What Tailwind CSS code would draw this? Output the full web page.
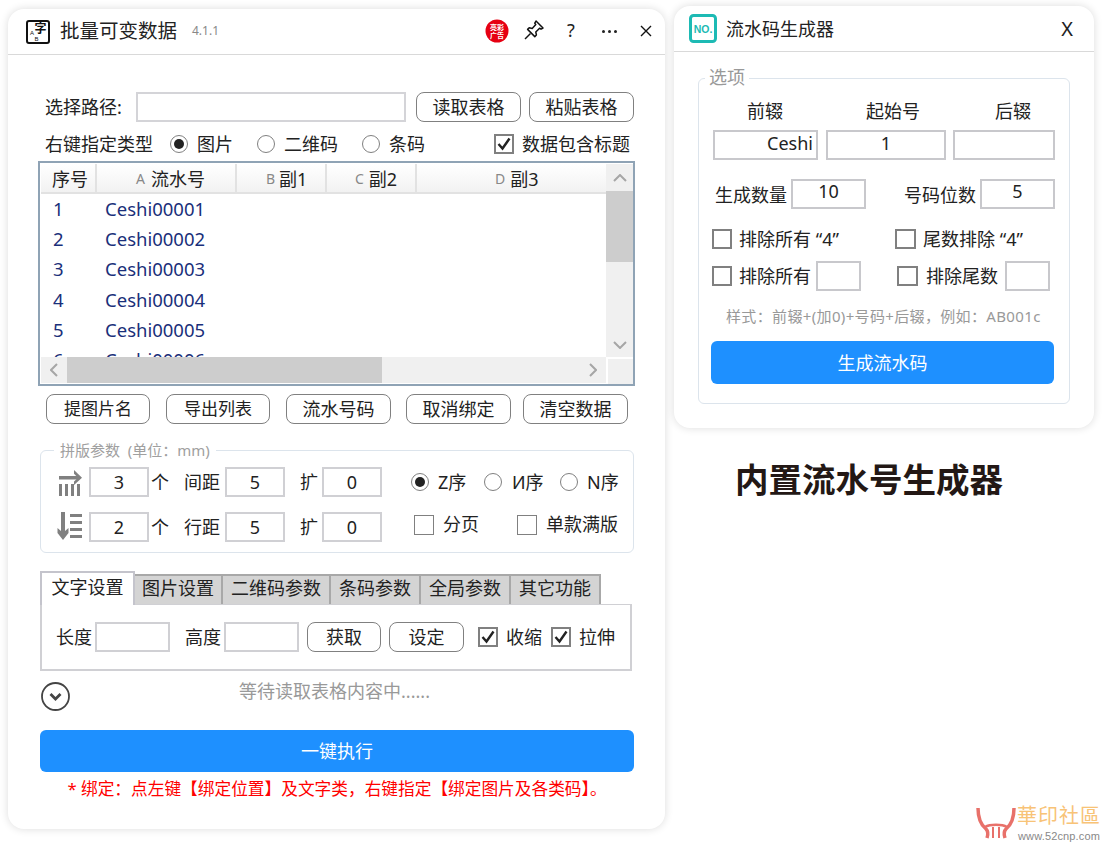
<!DOCTYPE html>
<html lang="zh-CN">
<head>
<meta charset="UTF-8">
<title>批量可变数据</title>
<script src="https://cdn.jsdelivr.net/npm/@tailwindcss/browser@4"></script>
</head>
<body class="bg-white">
<div class="relative w-[1104px] h-[843px] overflow-hidden bg-white text-[18px] leading-[30px] text-[#222] font-['Noto_Sans','Noto_Sans_CJK_SC',sans-serif]">

  <!-- main window -->
  <div class="absolute left-[8px] top-[9px] w-[657px] h-[820px] rounded-[16px] bg-white shadow-[0_0_8px_rgba(0,0,0,0.14)]">
    <!-- title bar -->
    <div class="relative h-[46px] border-b border-[#d9d9d9]">
      <svg class="absolute left-[18px] top-[11px]" width="24" height="24" viewBox="0 0 24 24">
        <rect x="1" y="1" width="22" height="22" rx="2" fill="#fff" stroke="#111" stroke-width="2"/>
        <text x="14.5" y="12.5" text-anchor="middle" font-size="12" font-weight="700" fill="#111" font-family="Noto Sans CJK SC">字</text>
        <text x="6" y="15" text-anchor="middle" font-size="6" fill="#111" font-family="Liberation Sans">A</text>
        <text x="10.5" y="21" text-anchor="middle" font-size="6" fill="#111" font-family="Liberation Sans">B</text>
      </svg>
      <div class="absolute left-[52px] top-[7px] text-[19.5px] leading-[30px] whitespace-nowrap">批量可变数据</div>
      <div class="absolute left-[184px] top-[7px] text-[12px] leading-[30px] text-[#888]">4.1.1</div>
      <svg class="absolute left-[477px] top-[10px]" width="24" height="24" viewBox="0 0 24 24">
        <circle cx="12" cy="12" r="11.5" fill="#e60012"/>
        <text x="12" y="11" text-anchor="middle" font-size="7" font-weight="700" fill="#fff" font-family="Noto Sans CJK SC">亮彩</text>
        <text x="12" y="19" text-anchor="middle" font-size="7" font-weight="700" fill="#fff" font-family="Noto Sans CJK SC">广告</text>
      </svg>
      <svg class="absolute left-[515px] top-[10px]" width="22" height="22" viewBox="0 0 22 22" fill="none" stroke="#111" stroke-width="1.5" stroke-linejoin="round">
        <path d="M13 2 L20 9 L18 10.2 L16.6 9.2 L12.8 13 L13.4 16 L11.8 17.6 L4.6 10.4 L6.2 8.8 L9.2 9.4 L12.8 5.6 L11.8 4.2 Z"/>
        <path d="M7.5 14.5 L2 20"/>
      </svg>
      <div class="absolute left-[556px] top-[6px] w-[14px] text-center text-[18px] leading-[30px]">?</div>
      <div class="absolute left-[594px] top-[21px] flex gap-[3px]">
        <span class="w-[3px] h-[3px] bg-[#222] rounded-full"></span>
        <span class="w-[3px] h-[3px] bg-[#222] rounded-full"></span>
        <span class="w-[3px] h-[3px] bg-[#222] rounded-full"></span>
      </div>
      <svg class="absolute left-[632px] top-[16px]" width="12" height="12" viewBox="0 0 12 12" stroke="#111" stroke-width="1.4">
        <path d="M1 1 L11 11 M11 1 L1 11"/>
      </svg>
    </div>

    <div class="pl-[32px] w-[657px]">
      <!-- path row -->
      <div class="flex items-center h-[30px] mt-[37px]">
        <span class="ml-[5px] w-[91px]">选择路径:</span>
        <div class="w-[270px] h-[30px] border-2 border-[#d4d4d8]"></div>
        <div class="ml-[10px] w-[105px] h-[30px] rounded-[8px] border-[1.5px] border-[#808080] flex items-center justify-center">读取表格</div>
        <div class="ml-[8px] w-[105px] h-[30px] rounded-[8px] border-[1.5px] border-[#808080] flex items-center justify-center">粘贴表格</div>
      </div>

      <!-- type row -->
      <div class="flex items-center h-[30px] mt-[7px]">
        <span class="ml-[5px] w-[125px]">右键指定类型</span>
        <span class="w-[18px] h-[18px] rounded-full border-[1.5px] border-[#808080] flex items-center justify-center"><span class="w-[10px] h-[10px] rounded-full bg-[#222]"></span></span>
        <span class="ml-[9px] w-[60px]">图片</span>
        <span class="w-[18px] h-[18px] rounded-full border-[1.5px] border-[#808080]"></span>
        <span class="ml-[9px] w-[78px]">二维码</span>
        <span class="w-[18px] h-[18px] rounded-full border-[1.5px] border-[#808080]"></span>
        <span class="ml-[9px] w-[105px]">条码</span>
        <span class="w-[20px] h-[20px] border-2 border-[#808080] flex items-center justify-center">
          <svg width="16" height="16" viewBox="0 0 16 16" fill="none" stroke="#222" stroke-width="2.4"><path d="M2.5 8 L6.5 12.5 L13.5 2.5"/></svg>
        </span>
        <span class="ml-[8px]">数据包含标题</span>
      </div>

      <!-- table -->
      <div class="relative -ml-[2px] mt-[2px] w-[597px] h-[225px] border-2 border-[#8fa3b5] overflow-hidden bg-white">
        <div class="flex h-[30px] mt-px ml-px w-[565px] text-[18px] bg-gradient-to-b from-white to-[#f2f2f2] border-b-2 border-[#e2e2e2]">
          <div class="w-[56px] border-r-2 border-[#e2e2e2] pl-[11px]">序号</div>
          <div class="w-[140px] border-r-2 border-[#e2e2e2] pl-[39px]"><span class="relative -top-[2px] text-[14px] text-[#888] mr-[6px]">A</span>流水号</div>
          <div class="w-[90px] border-r-2 border-[#e2e2e2] pl-[29px]"><span class="relative -top-[2px] text-[14px] text-[#888] mr-[4px]">B</span>副1</div>
          <div class="w-[90px] border-r-2 border-[#e2e2e2] pl-[28px]"><span class="relative -top-[2px] text-[14px] text-[#888] mr-[5px]">C</span>副2</div>
          <div class="w-[189px] pl-[78px]"><span class="relative -top-[2px] text-[14px] text-[#888] mr-[5px]">D</span>副3</div>
        </div>
        <div class="text-[#1a2f7a] text-[18.5px] leading-[30.2px]">
          <div class="flex"><span class="ml-[13px] w-[52px]">1</span><span>Ceshi00001</span></div>
          <div class="flex"><span class="ml-[13px] w-[52px]">2</span><span>Ceshi00002</span></div>
          <div class="flex"><span class="ml-[13px] w-[52px]">3</span><span>Ceshi00003</span></div>
          <div class="flex"><span class="ml-[13px] w-[52px]">4</span><span>Ceshi00004</span></div>
          <div class="flex"><span class="ml-[13px] w-[52px]">5</span><span>Ceshi00005</span></div>
          <div class="flex"><span class="ml-[13px] w-[52px]">6</span><span>Ceshi00006</span></div>
        </div>
        <!-- vertical scrollbar -->
        <div class="absolute left-[566px] top-px w-[27px] h-[193px] bg-[#f0f0f0] flex flex-col">
          <div class="h-[27px] flex items-center justify-center"><svg width="14" height="8" viewBox="0 0 14 8" fill="none" stroke="#a6a6a6" stroke-width="2"><path d="M1 7 L7 1 L13 7"/></svg></div>
          <div class="h-[71px] bg-[#cdcdcd]"></div>
          <div class="mt-auto h-[25px] flex items-center justify-center"><svg width="14" height="8" viewBox="0 0 14 8" fill="none" stroke="#a6a6a6" stroke-width="2"><path d="M1 1 L7 7 L13 1"/></svg></div>
        </div>
        <!-- horizontal scrollbar -->
        <div class="absolute left-px top-[194px] w-[565px] h-[26px] bg-[#f0f0f0] flex">
          <div class="w-[26px] flex items-center justify-center"><svg width="8" height="14" viewBox="0 0 8 14" fill="none" stroke="#a6a6a6" stroke-width="2"><path d="M7 1 L1 7 L7 13"/></svg></div>
          <div class="w-[315px] bg-[#cdcdcd]"></div>
          <div class="ml-auto w-[26px] flex items-center justify-center"><svg width="8" height="14" viewBox="0 0 8 14" fill="none" stroke="#a6a6a6" stroke-width="2"><path d="M1 1 L7 7 L1 13"/></svg></div>
        </div>
        <div class="absolute left-[568px] top-[196px] w-[25px] h-[25px] bg-[#f0f0f0]"></div>
      </div>

      <!-- action buttons -->
      <div class="flex h-[30px] mt-[8px] ml-[6px]">
        <div class="w-[104px] h-[30px] rounded-[8px] border-[1.5px] border-[#808080] flex items-center justify-center text-[17px]">提图片名</div>
        <div class="ml-[16px] w-[104px] h-[30px] rounded-[8px] border-[1.5px] border-[#808080] flex items-center justify-center text-[17px]">导出列表</div>
        <div class="ml-[16px] w-[105px] h-[30px] rounded-[8px] border-[1.5px] border-[#808080] flex items-center justify-center">流水号码</div>
        <div class="ml-[15px] w-[105px] h-[30px] rounded-[8px] border-[1.5px] border-[#808080] flex items-center justify-center">取消绑定</div>
        <div class="ml-[12px] w-[105px] h-[30px] rounded-[8px] border-[1.5px] border-[#808080] flex items-center justify-center">清空数据</div>
      </div>

      <!-- imposition group -->
      <div class="relative mt-[26px] w-[594px] h-[103px] rounded-[6px] border-[1.5px] border-[#dce4ec]">
        <div class="absolute left-[13px] -top-[11px] px-[6px] bg-white text-[15px] leading-[20px] text-[#a0a0a0] whitespace-pre">拼版参数  (单位&#xFF1A;mm)</div>
        <div class="flex items-center h-[30px] mt-[16px]">
          <svg class="ml-[17px]" width="25" height="27" viewBox="0 0 25 27" fill="#808080">
            <rect x="1" y="7" width="20" height="3.5"/>
            <path d="M16 1 L24 8.7 L16 16 V12.5 L20 8.7 L16 4.8 Z"/>
            <rect x="1" y="15" width="3" height="12"/><rect x="7" y="15" width="3" height="12"/><rect x="13" y="15" width="3" height="12"/><rect x="19" y="15" width="3" height="12"/>
          </svg>
          <div class="ml-[6px] w-[60px] h-[30px] border-2 border-[#d0d0d4] text-center leading-[26px]">3</div>
          <span class="ml-[2px] w-[33px]">个</span>
          <span class="w-[41px]">间距</span>
          <div class="w-[60px] h-[30px] border-2 border-[#d0d0d4] text-center leading-[26px]">5</div>
          <span class="ml-[15px] w-[22px]">扩</span>
          <div class="w-[60px] h-[30px] border-2 border-[#d0d0d4] text-center leading-[26px]">0</div>
          <span class="ml-[29px] w-[18px] h-[18px] rounded-full border-[1.5px] border-[#808080] flex items-center justify-center"><span class="w-[10px] h-[10px] rounded-full bg-[#222]"></span></span>
          <span class="ml-[9px] w-[46px]">Z序</span>
          <span class="w-[18px] h-[18px] rounded-full border-[1.5px] border-[#808080]"></span>
          <span class="ml-[10px] w-[48px]">И序</span>
          <span class="w-[18px] h-[18px] rounded-full border-[1.5px] border-[#808080]"></span>
          <span class="ml-[9px]">N序</span>
        </div>
        <div class="flex items-center h-[30px] mt-[15px]">
          <svg class="ml-[16px]" width="26" height="32" viewBox="0 0 26 32" fill="#808080">
            <path d="M4 1 H8 V20 L11.5 17 V22 L6 29 L0.5 22 V17 L4 20 Z"/>
            <rect x="13" y="3" width="12" height="3"/><rect x="13" y="10" width="12" height="3"/><rect x="13" y="17" width="12" height="3"/><rect x="13" y="24" width="12" height="3"/>
          </svg>
          <div class="ml-[6px] w-[60px] h-[30px] border-2 border-[#d0d0d4] text-center leading-[26px]">2</div>
          <span class="ml-[2px] w-[33px]">个</span>
          <span class="w-[41px]">行距</span>
          <div class="w-[60px] h-[30px] border-2 border-[#d0d0d4] text-center leading-[26px]">5</div>
          <span class="ml-[15px] w-[22px]">扩</span>
          <div class="w-[60px] h-[30px] border-2 border-[#d0d0d4] text-center leading-[26px]">0</div>
          <span class="ml-[32px] -mt-[5px] w-[20px] h-[20px] border-[1.5px] border-[#808080]"></span>
          <span class="ml-[9px] -mt-[6px] w-[74px]">分页</span>
          <span class="-mt-[5px] w-[20px] h-[20px] border-[1.5px] border-[#808080]"></span>
          <span class="ml-[9px] -mt-[6px]">单款满版</span>
        </div>
      </div>

      <!-- tabs -->
      <div class="flex items-end h-[33px] mt-[18px]">
        <div class="relative z-10 w-[95px] h-[34px] border-2 border-b-0 border-[#c4c4cc] bg-white text-center leading-[28px] -mb-[1px]">文字设置</div>
        <div class="w-[88px] h-[30px] border-2 border-b-0 border-l-0 border-[#a8a8a8] bg-[#d4d4d4] text-center leading-[25px]">图片设置</div>
        <div class="w-[108px] h-[30px] border-2 border-b-0 border-l-0 border-[#a8a8a8] bg-[#d4d4d4] text-center leading-[25px]">二维码参数</div>
        <div class="w-[90px] h-[30px] border-2 border-b-0 border-l-0 border-[#a8a8a8] bg-[#d4d4d4] text-center leading-[25px]">条码参数</div>
        <div class="w-[90px] h-[30px] border-2 border-b-0 border-l-0 border-[#a8a8a8] bg-[#d4d4d4] text-center leading-[25px]">全局参数</div>
        <div class="w-[90px] h-[30px] border-2 border-b-0 border-l-0 border-[#a8a8a8] bg-[#d4d4d4] text-center leading-[25px]">其它功能</div>
      </div>
      <div class="flex items-center w-[592px] h-[67px] border-2 border-t border-[#d0d0d4]">
        <span class="ml-[14px] w-[39px]">长度</span>
        <div class="w-[75px] h-[30px] border-2 border-[#d0d0d4]"></div>
        <span class="ml-[15px] w-[39px]">高度</span>
        <div class="w-[75px] h-[30px] border-2 border-[#d0d0d4]"></div>
        <div class="ml-[8px] w-[74px] h-[30px] rounded-[8px] border-[1.5px] border-[#808080] flex items-center justify-center">获取</div>
        <div class="ml-[8px] w-[75px] h-[30px] rounded-[8px] border-[1.5px] border-[#808080] flex items-center justify-center">设定</div>
        <span class="ml-[14px] w-[20px] h-[20px] border-2 border-[#808080] flex items-center justify-center">
          <svg width="16" height="16" viewBox="0 0 16 16" fill="none" stroke="#222" stroke-width="2.4"><path d="M2.5 8 L6.5 12.5 L13.5 2.5"/></svg>
        </span>
        <span class="ml-[8px] w-[45px]">收缩</span>
        <span class="w-[20px] h-[20px] border-2 border-[#808080] flex items-center justify-center">
          <svg width="16" height="16" viewBox="0 0 16 16" fill="none" stroke="#222" stroke-width="2.4"><path d="M2.5 8 L6.5 12.5 L13.5 2.5"/></svg>
        </span>
        <span class="ml-[8px]">拉伸</span>
      </div>

      <!-- status -->
      <div class="relative h-[29px] mt-[11px] w-[589px]">
        <svg class="absolute left-px top-0" width="29" height="29" viewBox="0 0 29 29" fill="none" stroke="#444">
          <circle cx="14.5" cy="14.5" r="13.5" stroke-width="1.8"/>
          <path d="M9.5 12 L14.5 17 L19.5 12" stroke-width="2.8"/>
        </svg>
        <div class="relative -top-[6px] text-center text-[#999]">等待读取表格内容中......</div>
      </div>

      <!-- run -->
      <div class="mt-[19px] w-[594px] h-[42px] rounded-[6px] bg-[#1e90ff] text-white flex items-center justify-center">一键执行</div>
      <div class="mt-[2px] w-[594px] text-center text-[16.7px] leading-[30px] text-[#f00] whitespace-nowrap">* 绑定&#xFF1A;点左键【绑定位置】及文字类&#xFF0C;右键指定【绑定图片及各类码】。</div>
    </div>
  </div>

  <!-- serial number window -->
  <div class="absolute left-[674px] top-[6px] w-[420px] h-[422px] rounded-[16px] bg-white shadow-[0_0_8px_rgba(0,0,0,0.14)]">
    <div class="relative h-[46px] border-b border-[#d9d9d9]">
      <svg class="absolute left-[15px] top-[8px]" width="28" height="29" viewBox="0 0 28 29">
        <rect x="1.5" y="1.5" width="25" height="26" rx="3" fill="#fff" stroke="#1dbab4" stroke-width="3"/>
        <text x="14" y="19" text-anchor="middle" font-size="10.5" font-weight="700" fill="#1dbab4" font-family="Liberation Sans">NO.</text>
      </svg>
      <div class="absolute left-[52px] top-[8px]">流水码生成器</div>
      <div class="absolute right-[21px] top-[8px] text-[20px]">X</div>
    </div>
    <div class="relative mx-[24px] mt-[26px] w-[372px] h-[326px] rounded-[6px] border-[1.5px] border-[#dce4ec]">
      <div class="absolute left-[6px] -top-[15px] px-[4px] bg-white text-[#999] text-[18px] leading-[26px]">选项</div>
      <div class="flex h-[30px] mt-[17px] text-center">
        <span class="ml-[47px] w-[38px]">前辍</span>
        <span class="ml-[82px] w-[54px]">起始号</span>
        <span class="ml-[74px] w-[38px]">后辍</span>
      </div>
      <div class="flex h-[30px] mt-[4px] ml-[14px]">
        <div class="w-[105px] h-[30px] border-2 border-[#c8c8cc] text-right pr-[3px] leading-[22px]">Ceshi</div>
        <div class="ml-[8px] w-[120px] h-[30px] border-2 border-[#c8c8cc] text-center leading-[22px]">1</div>
        <div class="ml-[7px] w-[102px] h-[30px] border-2 border-[#c8c8cc]"></div>
      </div>
      <div class="flex items-center h-[30px] mt-[19px]">
        <span class="ml-[16px] w-[76px] mt-[2px]">生成数量</span>
        <div class="w-[75px] h-[30px] border-2 border-[#c8c8cc] text-center leading-[20px]">10</div>
        <span class="ml-[38px] w-[76px] mt-[2px]">号码位数</span>
        <div class="w-[75px] h-[30px] border-2 border-[#c8c8cc] text-center leading-[20px]">5</div>
      </div>
      <div class="flex items-center h-[30px] mt-[15px]">
        <span class="ml-[13px] w-[20px] h-[20px] border-2 border-[#808080]"></span>
        <span class="ml-[7px] w-[155px] -mt-px">排除所有 “4”</span>
        <span class="ml-[1px] w-[21px] h-[20px] border-2 border-[#808080]"></span>
        <span class="ml-[7px] -mt-px">尾数排除 “4”</span>
      </div>
      <div class="flex items-center h-[30px] mt-[7px]">
        <span class="ml-[13px] w-[20px] h-[20px] border-2 border-[#808080]"></span>
        <span class="ml-[7px] w-[76px] -mt-px">排除所有</span>
        <div class="ml-px w-[45px] h-[30px] border-2 border-[#c8c8cc]"></div>
        <span class="ml-[36px] w-[21px] h-[20px] border-2 border-[#808080]"></span>
        <span class="ml-[8px] w-[79px] -mt-px">排除尾数</span>
        <div class="w-[45px] h-[30px] border-2 border-[#c8c8cc]"></div>
      </div>
      <div class="mt-[10px] ml-[27px] text-[15px] leading-[30px] tracking-[0.35px] text-[#999] whitespace-nowrap">样式&#xFF1A;前辍+(加0)+号码+后辍&#xFF0C;例如&#xFF1A;AB001c</div>
      <div class="mt-[10px] ml-[12px] w-[343px] h-[43px] rounded-[6px] bg-[#1e90ff] text-white flex items-center justify-center">生成流水码</div>
    </div>
  </div>

  <div class="absolute left-[735px] top-[455px] text-[33.5px] leading-[48px] font-bold text-[#231815] whitespace-nowrap">内置流水号生成器</div>

  <!-- watermark -->
  <div class="absolute left-[976px] top-[805px] flex items-start">
    <svg width="40" height="34" viewBox="0 0 40 34" fill="none" stroke="#e8716a" stroke-width="3.5">
      <path d="M2 3 C2 14 5 20 10 24 C12 26 12 30 11 33"/>
      <path d="M38 3 C38 14 35 20 30 24 C28 26 28 30 29 33"/>
      <path d="M9 22 C14 19 26 19 31 22" stroke-width="2.5"/>
      <path d="M17 22 V33 M23 22 V33" stroke-width="2"/>
    </svg>
    <div class="ml-[1px]">
      <div class="font-['Liberation_Serif','Noto_Sans_CJK_TC',serif] text-[20px] leading-[22px] text-[#f8c377] tracking-[1px] whitespace-nowrap">華印社區</div>
      <div class="ml-[1px] mt-[3px] text-[11px] leading-[12px] tracking-[0.15px] text-[#888] whitespace-nowrap font-['Liberation_Sans',sans-serif]">www.52cnp.com</div>
    </div>
  </div>
</div>
</body>
</html>
